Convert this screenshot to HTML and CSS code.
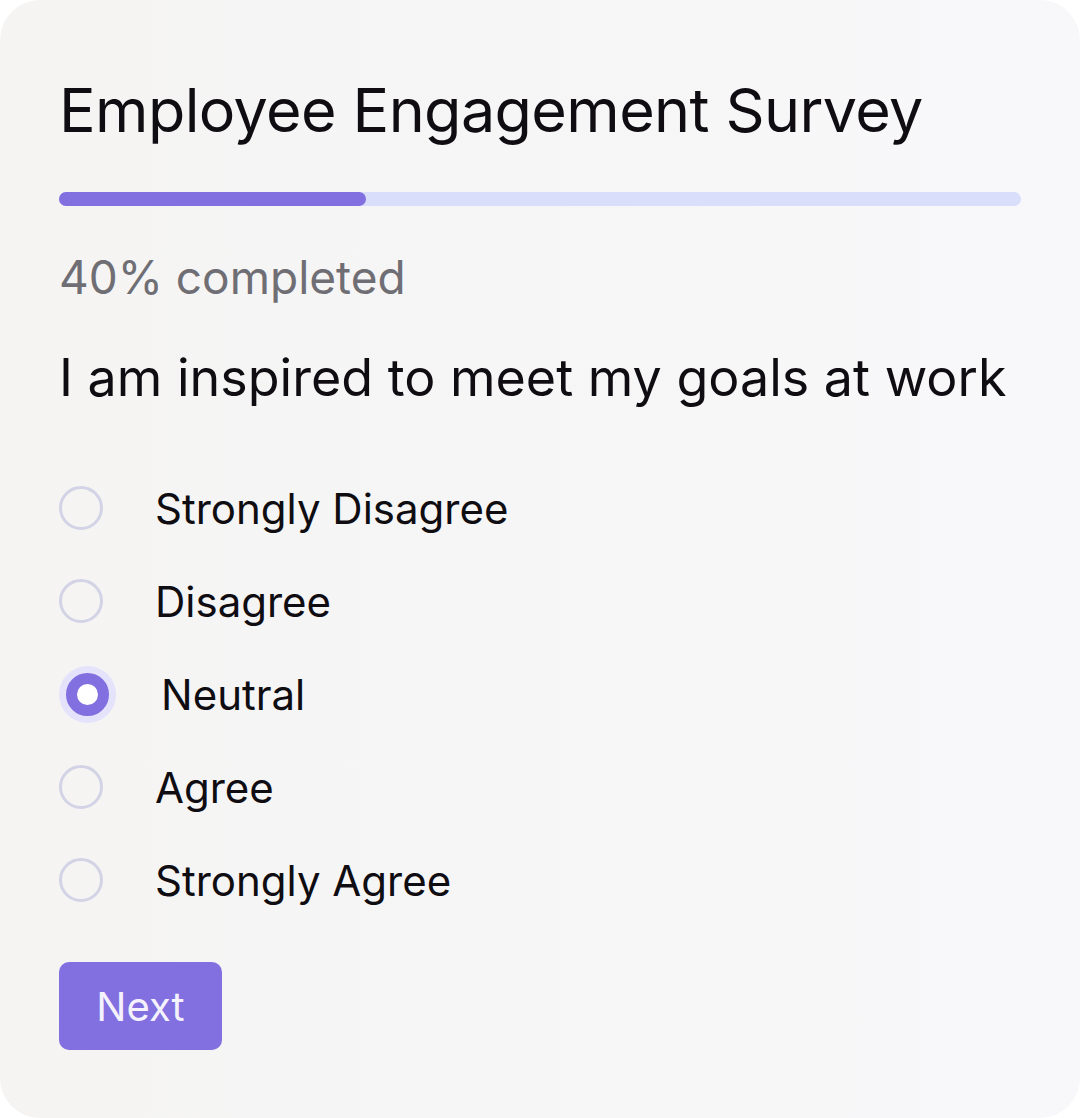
FILE: index.html
```html
<!DOCTYPE html>
<html>
	<head>
		<meta charset="UTF-8">
		<title>Employee Engagement Survey</title>
		<link rel="stylesheet" href="styles.css">
	</head>
	<body>
		<div class="card">
			<h1 class="title">Employee Engagement Survey</h1>
			<div class="progress">
				<div class="progress-fill"></div>
			</div>
			<p class="status">40% completed</p>
			<p class="question">I am inspired to meet my goals at work</p>
			<ul class="options">
				<li class="option"><span class="radio"></span><span class="label">Strongly Disagree</span></li>
				<li class="option"><span class="radio"></span><span class="label">Disagree</span></li>
				<li class="option selected"><span class="radio"></span><span class="label">Neutral</span></li>
				<li class="option"><span class="radio"></span><span class="label">Agree</span></li>
				<li class="option"><span class="radio"></span><span class="label">Strongly Agree</span></li>
			</ul>
			<button class="next" type="button">Next</button>
		</div>
	</body>
</html>
```

FILE: styles.css
```css
html, body{
	margin: 0;
	background: #fff;
}
body{
	font-family: Inter, "Liberation Sans", sans-serif;
	color: #0f0d12;
}
.card{
	box-sizing: border-box;
	height: 1118px;
	padding: 0 59px;
	border-radius: 40px;
	background: linear-gradient(to right, #f5f4f3, #f8f8fa);
	display: flex;
	flex-direction: column;
	align-items: flex-start;
}
.title{
	margin: 70px 0 0;
	font-size: 61px;
	font-weight: 400;
	line-height: 80px;
	letter-spacing: -0.6px;
}
.progress{
	align-self: stretch;
	height: 14px;
	margin-top: 42px;
	border-radius: 7px;
	background: #d9dffa;
}
.progress-fill{
	width: 307px;
	height: 100%;
	border-radius: 7px;
	background: #826fe0;
}
.status{
	margin: 41px 0 0;
	font-size: 46px;
	line-height: 60px;
	color: #6f6e74;
}
.question{
	margin: 36px 0 0;
	font-size: 52px;
	line-height: 70px;
}
.options{
	list-style: none;
	margin: 65px 0 0;
	padding: 0;
	display: flex;
	flex-direction: column;
	gap: 33px;
}
.option{
	display: flex;
	align-items: center;
	height: 60px;
	font-size: 42px;
}
.radio{
	box-sizing: border-box;
	width: 44px;
	height: 44px;
	border: 3.5px solid #d3d3e6;
	border-radius: 50%;
	margin-right: 52px;
}
.selected{
	padding-left: 7px;
}
.selected .radio{
	width: 43px;
	height: 43px;
	border: 11px solid #826fe0;
	background: #fff;
	box-shadow: 0 0 0 7px #e4e3fb;
}
.next{
	margin-top: 52px;
	width: 163px;
	height: 88px;
	border: 0;
	border-radius: 10px;
	background: #826fe0;
	color: #f4f2fc;
	font-family: inherit;
	font-size: 40px;
}
```
